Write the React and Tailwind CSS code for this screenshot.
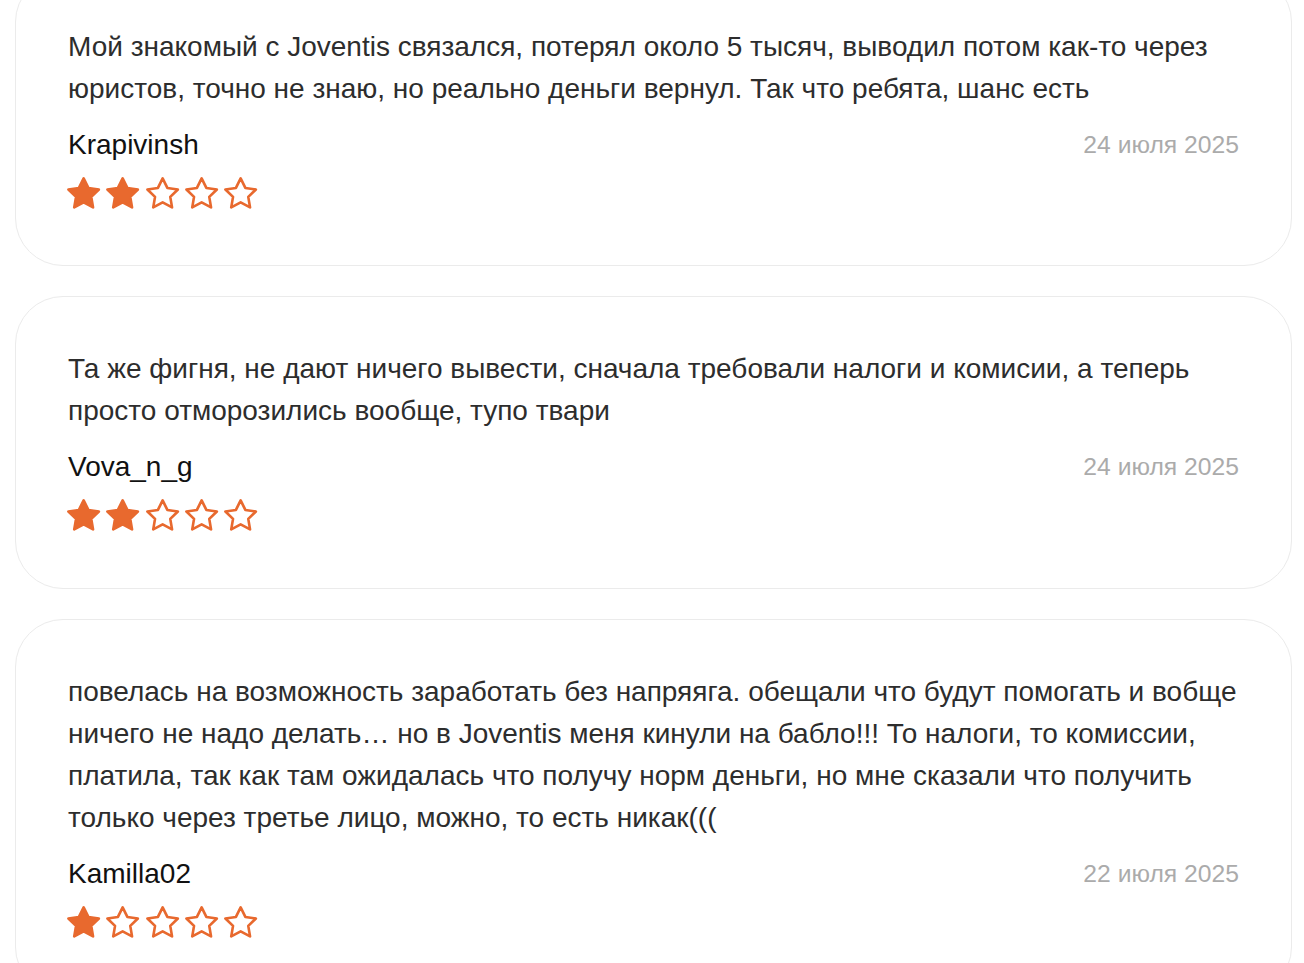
import React from 'react';

const reviews = [
  {
    text: 'Мой знакомый с Joventis связался, потерял около 5 тысяч, выводил потом как-то через юристов, точно не знаю, но реально деньги вернул. Так что ребята, шанс есть',
    author: 'Krapivinsh',
    date: '24 июля 2025',
    rating: 2,
  },
  {
    text: 'Та же фигня, не дают ничего вывести, сначала требовали налоги и комисии, а теперь просто отморозились вообще, тупо твари',
    author: 'Vova_n_g',
    date: '24 июля 2025',
    rating: 2,
  },
  {
    text: 'повелась на возможность заработать без напряяга. обещали что будут помогать и вобще ничего не надо делать… но в Joventis меня кинули на бабло!!! То налоги, то комиссии, платила, так как там ожидалась что получу норм деньги, но мне сказали что получить только через третье лицо, можно, то есть никак(((',
    author: 'Kamilla02',
    date: '22 июля 2025',
    rating: 1,
  },
];

// chunky five-point star, inner radius about half of the outer one
const STAR_POINTS =
  '12,2.2 15.03,8.33 21.8,9.32 16.9,14.09 18.05,20.83 12,17.65 5.95,20.83 7.1,14.09 2.2,9.32 8.97,8.33';

const Star = ({ filled }) => (
  <svg width="37.3" height="37.3" viewBox="0 0 24 24" className="block">
    <polygon
      points={STAR_POINTS}
      fill={filled ? '#e8692e' : 'none'}
      stroke="#e8692e"
      strokeWidth="1.7"
      strokeLinejoin="round"
    />
  </svg>
);

const ReviewCard = ({ review }) => (
  <div className="rounded-[48px] border border-[#ebebeb] bg-white px-[52px] pt-[51px] pb-[53px]">
    <p className="text-[28px] leading-[42px] text-[#2d2d2d]">{review.text}</p>
    <div className="mt-[14px] flex items-center justify-between leading-[42px]">
      <span className="text-[28px] text-[#111]">{review.author}</span>
      <span className="text-[24.7px] text-[#ababab]">{review.date}</span>
    </div>
    <div className="mt-[9px] -ml-[3px] flex gap-[2px]">
      {[1, 2, 3, 4, 5].map((n) => (
        <Star key={n} filled={n <= review.rating} />
      ))}
    </div>
  </div>
);

const App = () => {
  return (
    <div className="min-h-screen overflow-hidden bg-white" style={{ fontFamily: '"Liberation Sans", Arial, sans-serif' }}>
      <div className="-mt-[26px] ml-[15px] flex w-[1277px] flex-col gap-[30px]">
        {reviews.map((r, i) => (
          <ReviewCard key={i} review={r} />
        ))}
      </div>
    </div>
  );
};

export default App;
